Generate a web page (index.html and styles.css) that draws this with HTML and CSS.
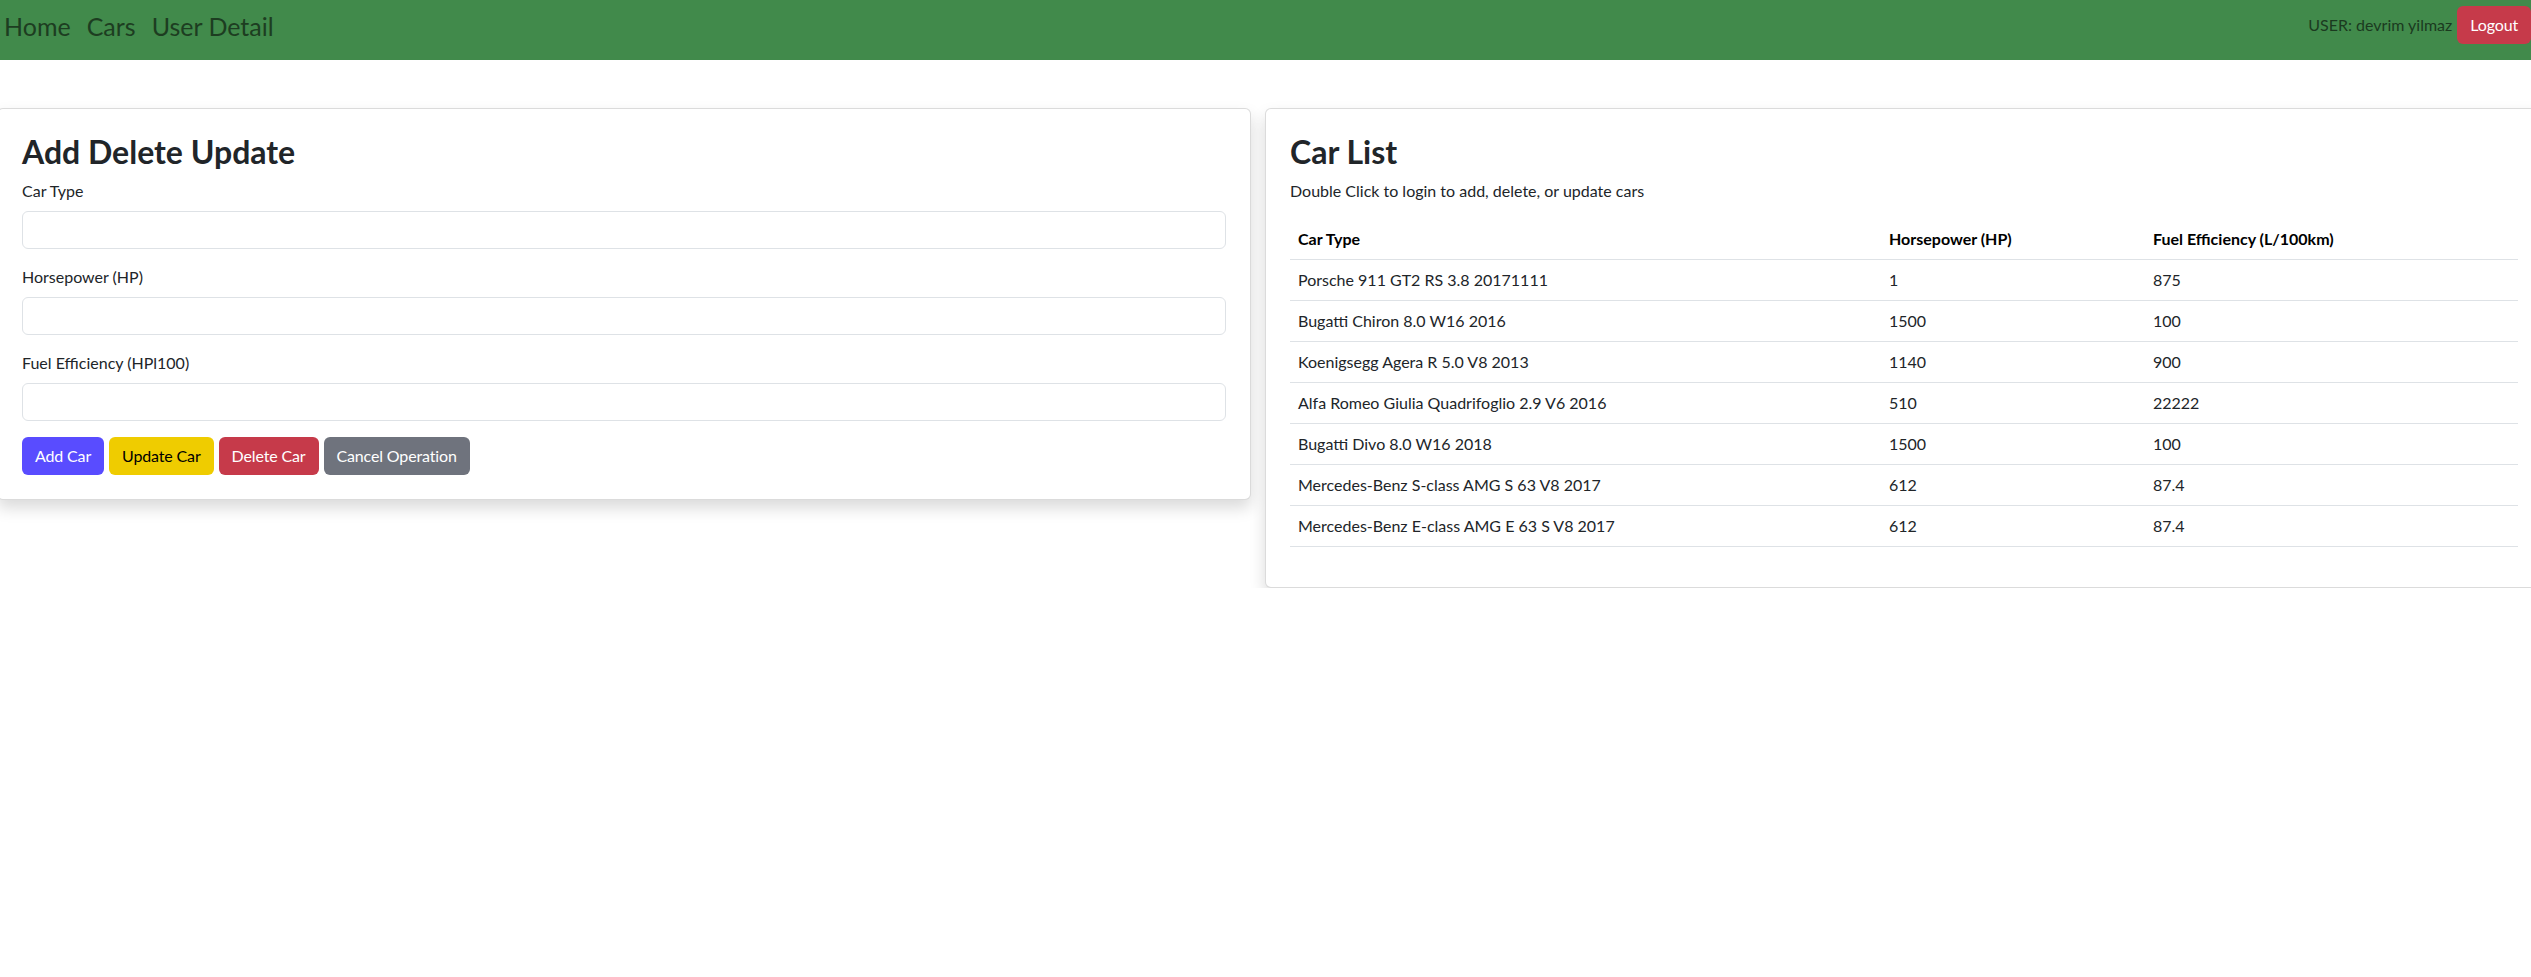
FILE: index.html
```html
<!DOCTYPE html>
<html lang="en">
<head>
<meta charset="utf-8">
<title>Cars</title>
<link rel="stylesheet" href="styles.css">
</head>
<body>
<nav class="topbar">
  <div class="nav-links">
    <a class="nav-link" href="#">Home</a>
    <a class="nav-link" href="#">Cars</a>
    <a class="nav-link" href="#">User Detail</a>
  </div>
  <div class="nav-user">
    <span class="user-name">USER: devrim yilmaz</span>
    <button class="btn btn-danger">Logout</button>
  </div>
</nav>

<main class="content">
  <section class="card">
    <h2 class="card-title">Add Delete Update</h2>
    <div class="field">
      <label class="field-label">Car Type</label>
      <input class="field-input" type="text">
    </div>
    <div class="field">
      <label class="field-label">Horsepower (HP)</label>
      <input class="field-input" type="text">
    </div>
    <div class="field">
      <label class="field-label">Fuel Efficiency (HPl100)</label>
      <input class="field-input" type="text">
    </div>
    <div class="actions">
      <button class="btn btn-primary">Add Car</button>
      <button class="btn btn-warning">Update Car</button>
      <button class="btn btn-danger">Delete Car</button>
      <button class="btn btn-secondary">Cancel Operation</button>
    </div>
  </section>

  <section class="card">
    <h2 class="card-title">Car List</h2>
    <p class="hint">Double Click to login to add, delete, or update cars</p>
    <table class="car-table">
      <colgroup>
        <col class="col-type">
        <col class="col-hp">
        <col>
      </colgroup>
      <thead>
        <tr><th>Car Type</th><th>Horsepower (HP)</th><th>Fuel Efficiency (L/100km)</th></tr>
      </thead>
      <tbody>
        <tr><td>Porsche 911 GT2 RS 3.8 20171111</td><td>1</td><td>875</td></tr>
        <tr><td>Bugatti Chiron 8.0 W16 2016</td><td>1500</td><td>100</td></tr>
        <tr><td>Koenigsegg Agera R 5.0 V8 2013</td><td>1140</td><td>900</td></tr>
        <tr><td>Alfa Romeo Giulia Quadrifoglio 2.9 V6 2016</td><td>510</td><td>22222</td></tr>
        <tr><td>Bugatti Divo 8.0 W16 2018</td><td>1500</td><td>100</td></tr>
        <tr><td>Mercedes-Benz S-class AMG S 63 V8 2017</td><td>612</td><td>87.4</td></tr>
        <tr><td>Mercedes-Benz E-class AMG E 63 S V8 2017</td><td>612</td><td>87.4</td></tr>
      </tbody>
    </table>
  </section>
</main>
</body>
</html>
```

FILE: styles.css
```css
* { box-sizing: border-box; }

html, body {
  margin: 0;
  padding: 0;
}

body {
  font-family: Lato, "Noto Sans", "Liberation Sans", sans-serif;
  font-size: 16px;
  line-height: 1.5;
  color: #212529;
  background: #ffffff;
  overflow-x: hidden;
}

.topbar {
  display: flex;
  justify-content: space-between;
  align-items: flex-start;
  height: 60px;
  background: #418a4b;
  padding: 6px 0 0 4px;
}

.nav-links {
  display: flex;
  gap: 16px;
  padding-top: 2px;
}

.nav-link {
  font-size: 25px;
  line-height: 36px;
  color: #1d3d21;
  text-decoration: none;
}

.nav-user {
  display: flex;
  align-items: center;
  gap: 5px;
}

.user-name {
  color: #1b3a1f;
  font-size: 16px;
}

.btn {
  font-family: inherit;
  font-size: 16px;
  line-height: 24px;
  padding: 6px 12px;
  border: 1px solid transparent;
  border-radius: 6px;
  letter-spacing: -0.15px;
  cursor: pointer;
}

.btn-primary { background: #594cff; color: #fff; }
.btn-warning { background: #efcc00; color: #000; }
.btn-danger { background: #c63a4a; color: #fff; }
.btn-secondary { background: #6f737d; color: #fff; }

.content {
  display: grid;
  grid-template-columns: 1254px 1fr;
  gap: 14px;
  align-items: start;
  margin-top: 48px;
  margin-left: -3px;
  width: 2546px;
}

.card {
  background: #fff;
  border: 1px solid rgba(0, 0, 0, 0.14);
  border-radius: 6px;
  padding: 24px;
  box-shadow: 0 8px 16px rgba(0, 0, 0, 0.15);
}

.card-title {
  margin: 0 0 8px;
  font-size: 32px;
  line-height: 1.2;
  font-weight: 700;
  color: #212529;
}

.field {
  margin-bottom: 16px;
}

.field-label {
  display: block;
  margin-bottom: 8px;
}

.field-input {
  display: block;
  width: 100%;
  height: 38px;
  padding: 6px 12px;
  border: 1px solid #dee2e6;
  border-radius: 6px;
  font-family: inherit;
  font-size: 16px;
  background: #fff;
}

.actions {
  display: flex;
  gap: 5px;
}

.hint {
  margin: 0 0 16px;
}

.car-table {
  width: 100%;
  border-collapse: collapse;
  margin-bottom: 16px;
}

.col-type { width: 591px; }
.col-hp { width: 264px; }

.car-table th,
.car-table td {
  padding: 8px;
  text-align: left;
  border-bottom: 1px solid #dee2e6;
}

.car-table th {
  font-weight: 700;
  color: #000;
}

.car-table td {
  color: #212529;
}
```
